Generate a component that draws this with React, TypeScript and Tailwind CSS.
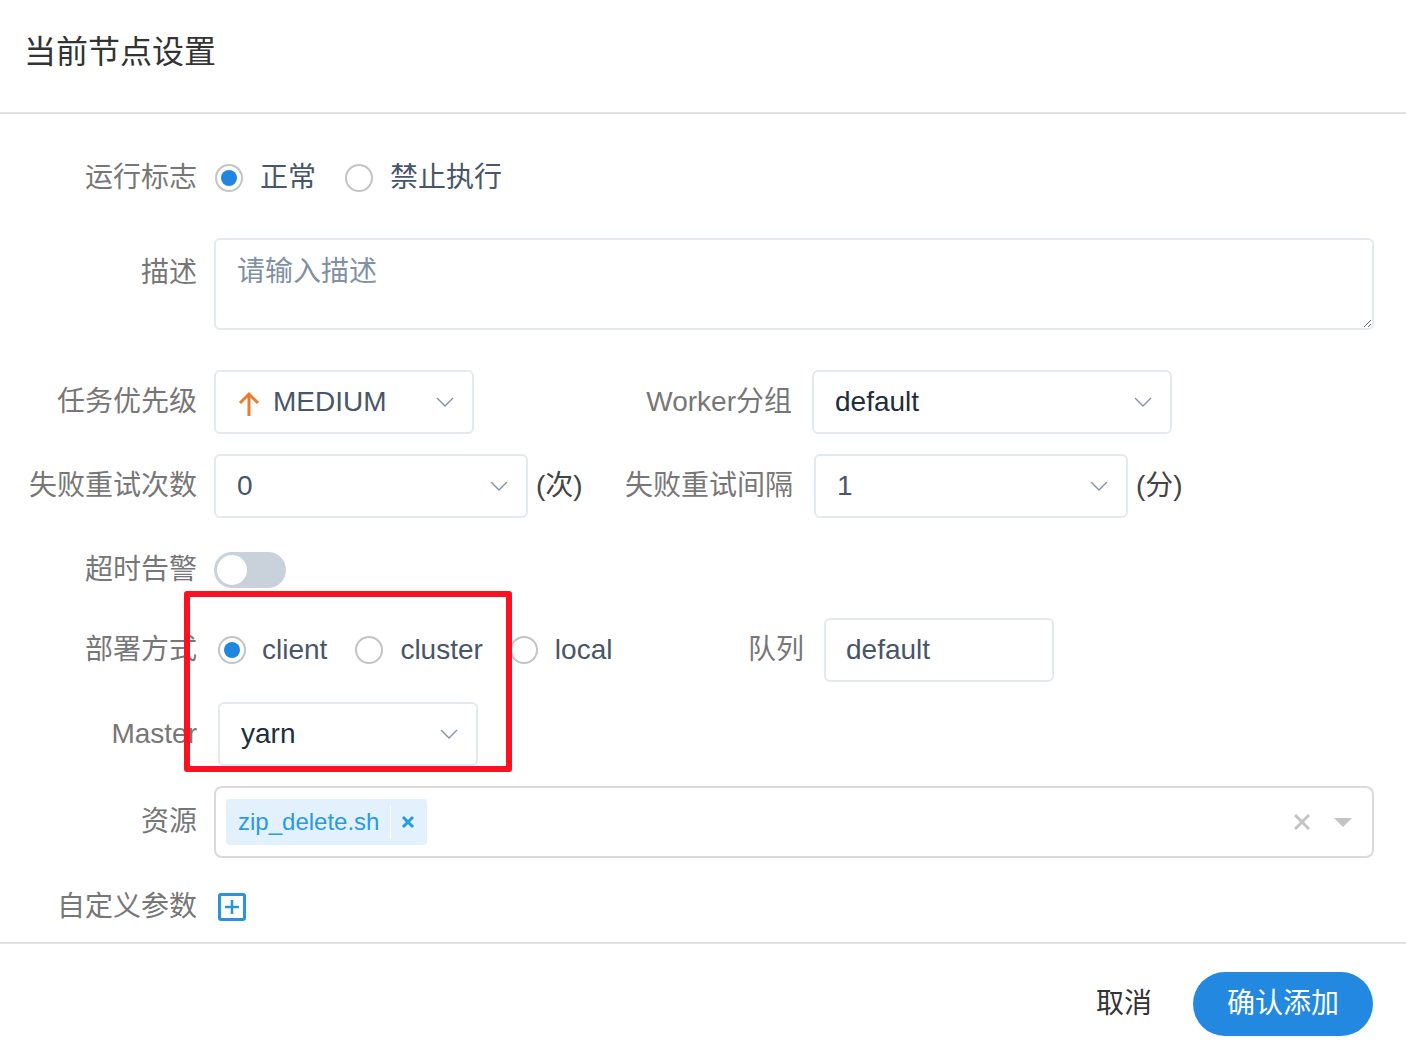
import React from 'react';

const FONT = "font-['Liberation_Sans','Noto_Sans_CJK_SC',sans-serif]";

const Chevron: React.FC<{ className?: string }> = ({ className = '' }) => (
  <svg className={className} width="18" height="10" viewBox="0 0 18 10" fill="none">
    <polyline points="1,1 9,9 17,1" stroke="#8492a6" strokeWidth="1.4" />
  </svg>
);

const Radio: React.FC<{ checked?: boolean }> = ({ checked }) => (
  <span className="flex h-[28px] w-[28px] shrink-0 items-center justify-center rounded-full border-2 border-[#c4c4c4] bg-white">
    {checked && <span className="h-[16px] w-[16px] rounded-full bg-[#2186e0]" />}
  </span>
);

const Label: React.FC<{ children: React.ReactNode; className?: string }> = ({ children, className = 'w-[197px]' }) => (
  <div className={`${className} shrink-0 text-right text-[28px] text-[#777]`}>{children}</div>
);

const Select: React.FC<{ value: React.ReactNode; width: string; dark?: boolean; className?: string }> = ({
  value,
  width,
  dark,
  className = '',
}) => (
  <div
    className={`${width} ${className} flex h-[64px] shrink-0 items-center justify-between rounded-[6px] border-2 border-[#e4e9f0] pl-[21px] pr-[18px] text-[28px] ${
      dark ? 'text-[#1f2d3d]' : 'text-[#475669]'
    }`}
  >
    <div className="flex items-center">{value}</div>
    <Chevron />
  </div>
);

export default function App() {
  return (
    <div className={`relative h-[1060px] w-[1406px] overflow-hidden bg-white ${FONT}`}>
      {/* header */}
      <div className="flex h-[112px] items-center pb-[8px] pl-[24px] text-[32px] text-[#333]">当前节点设置</div>
      <div className="h-[2px] bg-[#e2e2e2]" />

      {/* body */}
      <div className="h-[828px] pt-[44px]">
        {/* 运行标志 */}
        <div className="flex h-[40px] items-center">
          <Label>运行标志</Label>
          <div className="ml-[18px] flex items-center text-[28px] text-[#475669]">
            <Radio checked />
            <span className="ml-[17px]">正常</span>
            <span className="ml-[29px]"><Radio /></span>
            <span className="ml-[17px]">禁止执行</span>
          </div>
        </div>

        {/* 描述 */}
        <div className="mt-[40px] flex h-[92px]">
          <Label className="w-[197px] pt-[14px]">描述</Label>
          <textarea
            placeholder="请输入描述"
            className="ml-[17px] block h-[92px] w-[1160px] rounded-[6px] border-2 border-[#e4e9f0] pl-[21px] pt-[12px] text-[28px] leading-[40px] text-[#475669] outline-none placeholder:text-[#8190a5]"
          />
        </div>

        {/* 任务优先级 / Worker分组 */}
        <div className="mt-[40px] flex h-[64px] items-center">
          <Label>任务优先级</Label>
          <Select
            width="w-[260px]"
            className="ml-[17px]"
            value={
              <>
                <svg width="24" height="26" viewBox="0 0 24 26" fill="none" className="mr-[12px] mt-[4px]">
                  <path d="M12 25V3M3 12l9-9 9 9" stroke="#ee7b2b" strokeWidth="3" />
                </svg>
                MEDIUM
              </>
            }
          />
          <Label className="w-[318px]">Worker分组</Label>
          <Select width="w-[360px]" className="ml-[20px]" value="default" dark />
        </div>

        {/* 失败重试 */}
        <div className="mt-[20px] flex h-[64px] items-center">
          <Label>失败重试次数</Label>
          <Select width="w-[314px]" className="ml-[17px]" value="0" />
          <span className="ml-[8px] w-[50px] text-[28px] text-[#444]">(次)</span>
          <Label className="w-[207px]">失败重试间隔</Label>
          <Select width="w-[314px]" className="ml-[21px]" value="1" />
          <span className="ml-[8px] text-[28px] text-[#444]">(分)</span>
        </div>

        {/* 超时告警 */}
        <div className="mt-[34px] flex h-[36px] items-center">
          <Label>超时告警</Label>
          <div className="ml-[17px] flex h-[36px] w-[72px] items-center rounded-full bg-[#c9d1db] pl-[3px]">
            <span className="h-[30px] w-[30px] rounded-full bg-white" />
          </div>
        </div>

        {/* 部署方式 / 队列 */}
        <div className="mt-[30px] flex h-[64px] items-center">
          <Label>部署方式</Label>
          <div className="ml-[21px] flex w-[530px] items-center text-[28px] text-[#475669]">
            <Radio checked />
            <span className="ml-[16px]">client</span>
            <span className="ml-[28px]"><Radio /></span>
            <span className="ml-[17px]">cluster</span>
            <span className="ml-[27px]"><Radio /></span>
            <span className="ml-[17px]">local</span>
          </div>
          <span className="text-[28px] text-[#777]">队列</span>
          <div className="ml-[20px] flex h-[64px] w-[230px] items-center rounded-[6px] border-2 border-[#e4e9f0] pl-[20px] text-[28px] text-[#475669]">
            default
          </div>
        </div>

        {/* Master */}
        <div className="mt-[20px] flex h-[64px] items-center">
          <Label>Master</Label>
          <Select width="w-[260px]" className="ml-[21px]" value="yarn" dark />
        </div>

        {/* 资源 */}
        <div className="mt-[20px] flex h-[72px] items-center">
          <Label>资源</Label>
          <div className="ml-[17px] flex h-[72px] w-[1160px] items-center justify-between rounded-[8px] border-2 border-[#dadada] pl-[10px] pr-[20px]">
            <div className="flex h-[46px] items-center rounded-[4px] bg-[#e3f1fc] pl-[12px] pr-[12px] text-[24px] text-[#2a9ae2]">
              <span>zip_delete.sh</span>
              <span className="ml-[11px] h-[34px] w-[1px] bg-white" />
              <svg width="14" height="14" viewBox="0 0 14 14" className="ml-[10px]">
                <path d="M2 2l10 10M12 2L2 12" stroke="#2a9ae2" strokeWidth="3" />
              </svg>
            </div>
            <div className="flex items-center">
              <svg width="16" height="16" viewBox="0 0 16 16">
                <path d="M1 1l14 14M15 1L1 15" stroke="#c4c4c4" strokeWidth="3" />
              </svg>
              <svg width="18" height="9" viewBox="0 0 18 9" className="ml-[24px]">
                <path d="M0 0h18L9 9z" fill="#c4c4c4" />
              </svg>
            </div>
          </div>
        </div>

        {/* 自定义参数 */}
        <div className="mt-[29px] flex h-[40px] items-center">
          <Label>自定义参数</Label>
          <div className="ml-[21px] flex h-[28px] w-[28px] items-center justify-center rounded-[3px] border-[3px] border-[#2a94db]">
            <svg width="16" height="16" viewBox="0 0 16 16">
              <path d="M8 1v14M1 8h14" stroke="#2a94db" strokeWidth="2.5" />
            </svg>
          </div>
        </div>
      </div>

      {/* footer */}
      <div className="h-[2px] bg-[#e2e2e2]" />
      <div className="flex items-center justify-end pr-[33px] pt-[28px]">
        <span className="text-[28px] text-[#333]">取消</span>
        <button className="ml-[41px] h-[64px] w-[180px] rounded-full bg-[#2389e0] text-[28px] text-white">确认添加</button>
      </div>

      {/* highlight box */}
      <div className="absolute left-[184px] top-[591px] h-[181px] w-[328px] rounded-[3px] border-[6px] border-[#ff1020]" />
    </div>
  );
}
